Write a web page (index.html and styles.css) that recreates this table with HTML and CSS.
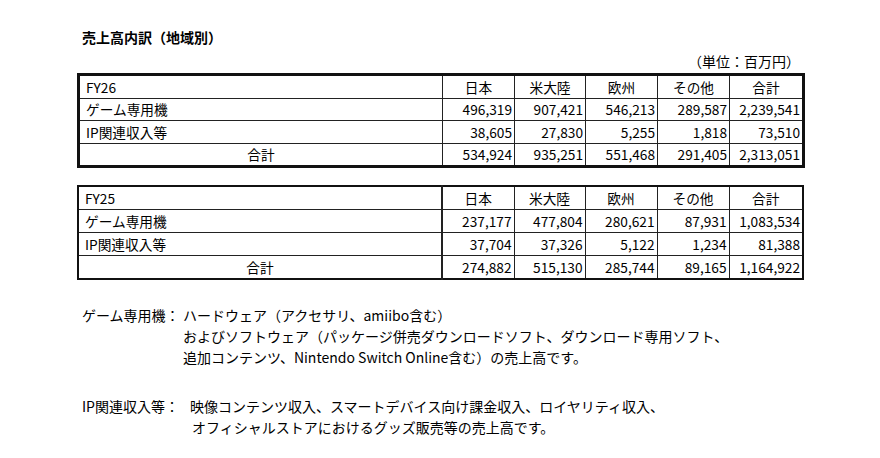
FILE: index.html
```html
<!DOCTYPE html>
<html lang="ja">
<head>
<meta charset="utf-8">
<title>売上高内訳（地域別）</title>
<link rel="stylesheet" href="styles.css">
</head>
<body>
<div class="page">
  <h1 class="title">売上高内訳（地域別）</h1>
  <div class="unit">（単位：百万円）</div>

  <table class="sales thick">
    <colgroup>
      <col class="c-label"><col class="c-num"><col class="c-num2"><col class="c-num"><col class="c-num"><col class="c-total">
    </colgroup>
    <tr class="head"><td class="label">FY26</td><th>日本</th><th>米大陸</th><th>欧州</th><th>その他</th><th>合計</th></tr>
    <tr><td class="label">ゲーム専用機</td><td>496,319</td><td>907,421</td><td>546,213</td><td>289,587</td><td>2,239,541</td></tr>
    <tr><td class="label">IP関連収入等</td><td>38,605</td><td>27,830</td><td>5,255</td><td>1,818</td><td>73,510</td></tr>
    <tr><td class="sum">合計</td><td>534,924</td><td>935,251</td><td>551,468</td><td>291,405</td><td>2,313,051</td></tr>
  </table>

  <table class="sales thin">
    <colgroup>
      <col class="c-label"><col class="c-num"><col class="c-num2"><col class="c-num"><col class="c-num"><col class="c-total">
    </colgroup>
    <tr class="head"><td class="label">FY25</td><th>日本</th><th>米大陸</th><th>欧州</th><th>その他</th><th>合計</th></tr>
    <tr><td class="label">ゲーム専用機</td><td>237,177</td><td>477,804</td><td>280,621</td><td>87,931</td><td>1,083,534</td></tr>
    <tr><td class="label">IP関連収入等</td><td>37,704</td><td>37,326</td><td>5,122</td><td>1,234</td><td>81,388</td></tr>
    <tr><td class="sum">合計</td><td>274,882</td><td>515,130</td><td>285,744</td><td>89,165</td><td>1,164,922</td></tr>
  </table>

  <div class="notes">
    <div class="note">
      <div class="note-label">ゲーム専用機：</div>
      <div class="note-body">
        <p>ハードウェア（アクセサリ、amiibo含む）</p>
        <p>およびソフトウェア（パッケージ併売ダウンロードソフト、ダウンロード専用ソフト、</p>
        <p>追加コンテンツ、Nintendo Switch Online含む）の売上高です。</p>
      </div>
    </div>
    <div class="note note-ip">
      <div class="note-label">IP関連収入等：</div>
      <div class="note-body indent">
        <p>映像コンテンツ収入、スマートデバイス向け課金収入、ロイヤリティ収入、</p>
        <p class="shift">オフィシャルストアにおけるグッズ販売等の売上高です。</p>
      </div>
    </div>
  </div>

  <h2 class="next-title">地域別構成</h2>
</div>
</body>
</html>
```
FILE: styles.css
```css
html, body {
  margin: 0;
  padding: 0;
  background: #ffffff;
}

body {
  font-family: "Noto Sans CJK JP", "Noto Sans", sans-serif;
  color: #000000;
  overflow: hidden;
}

.page {
  width: 726px;
  padding: 28px 0 0 77px;
}

.title {
  margin: 0 0 0 5px;
  font-size: 14px;
  font-weight: bold;
  line-height: 18px;
}

.unit {
  margin: 6px 0 0 0;
  text-align: right;
  font-size: 14px;
  line-height: 18px;
  padding-right: 3px;
}

.sales {
  width: 726px;
  border-collapse: collapse;
  table-layout: fixed;
  font-size: 13.7px;
  margin-top: 3px;
}

.sales.thick {
  border: 3px solid #111;
}

.sales.thin {
  border: 2px solid #111;
  margin-top: 17px;
}

.c-label { width: 364px; }
.c-num { width: 72px; }
.c-num2 { width: 71px; }
.c-total { width: 74px; }

.sales td,
.sales th {
  border: 1px solid #222;
  height: 21.5px;
  padding: 0 2px 0 0;
  line-height: 20px;
  text-align: right;
  font-weight: normal;
  white-space: nowrap;
}

.sales.thin tr > * {
  height: 22px;
}

.sales.thin td.label,
.sales.thin td.sum {
  border-right-width: 2px;
}

.sales th {
  text-align: center;
  padding: 0;
}

.sales td.label {
  text-align: left;
  padding-left: 6px;
}

.sales td.sum {
  text-align: center;
  padding: 0;
}

.notes {
  margin-top: 25px;
  font-size: 14px;
  line-height: 21px;
}

.note {
  display: flex;
}

.note-label {
  width: 106px;
  padding-left: 5px;
  box-sizing: border-box;
  flex-shrink: 0;
}

.note-body p {
  margin: 0;
}

.note-ip {
  margin-top: 28px;
}

.note-body.indent {
  padding-left: 7px;
}

.note-body .shift {
  padding-left: 2px;
}

.next-title {
  margin: 20px 0 0 5px;
  font-size: 14px;
  font-weight: bold;
  line-height: 18px;
  color: #aaa;
}
```
